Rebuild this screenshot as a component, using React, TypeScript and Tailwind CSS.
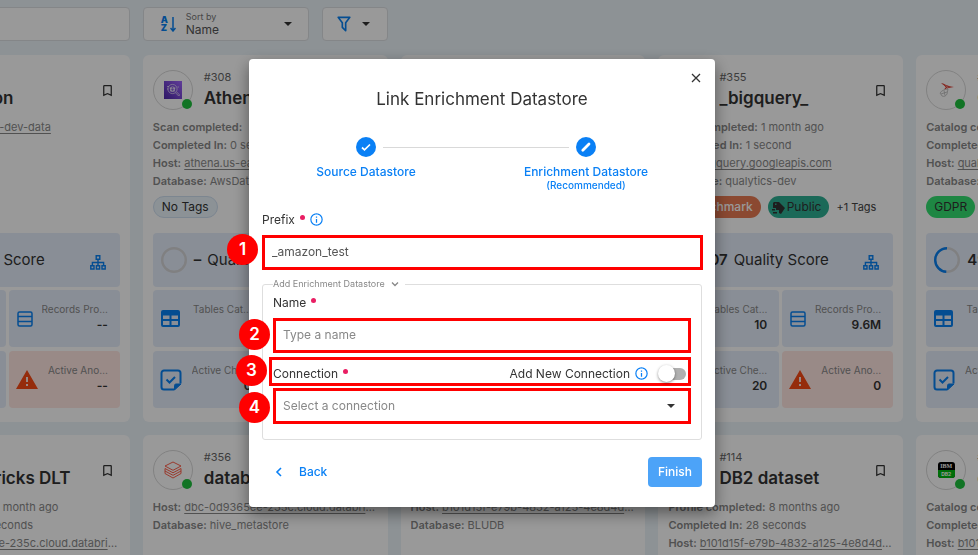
import React from "react";

type Line = { label: string; value: string; link?: boolean };
type Tag = { text: string; tone: "none" | "orange" | "teal" | "green"; icon?: boolean };
type Store = {
  id: string;
  name: string;
  logo: "athena" | "databricks" | "sqlserver" | "db2" | "blank";
  lines: Line[];
  tags?: Tag[];
  more?: string;
  score?: string;
  ring?: number;
  tables?: string;
  records?: string;
  checks?: string;
  anomalies?: string;
};

const stores: Store[] = [
  {
    id: "",
    name: "Amazon",
    logo: "blank",
    lines: [{ label: "Host:", value: "qualytics-aws-dev-data", link: true }],
    records: "--",
    anomalies: "--",
  },
  {
    id: "#308",
    name: "Athena",
    logo: "athena",
    lines: [
      { label: "Scan completed:", value: "" },
      { label: "Completed In:", value: "0 seconds" },
      { label: "Host:", value: "athena.us-east", link: true },
      { label: "Database:", value: "AwsData" },
    ],
    tags: [{ text: "No Tags", tone: "none" }],
    checks: "0",
  },
  { id: "", name: "", logo: "blank", lines: [] },
  {
    id: "#355",
    name: "_bigquery_",
    logo: "blank",
    lines: [
      { label: "Scan completed:", value: "1 month ago" },
      { label: "Completed In:", value: "1 second" },
      { label: "Host:", value: "bigquery.googleapis.com", link: true },
      { label: "Database:", value: "qualytics-dev" },
    ],
    tags: [
      { text: "Benchmark", tone: "orange", icon: true },
      { text: "Public", tone: "teal", icon: true },
    ],
    more: "+1 Tags",
    score: "07",
    ring: 7,
    tables: "10",
    records: "9.6M",
    checks: "20",
    anomalies: "0",
  },
  {
    id: "#",
    name: "C",
    logo: "sqlserver",
    lines: [
      { label: "Catalog completed:", value: "" },
      { label: "Completed In:", value: "" },
      { label: "Host:", value: "qualytics", link: true },
      { label: "Database:", value: "" },
    ],
    tags: [{ text: "GDPR", tone: "green" }],
    score: "49",
    ring: 49,
  },
  {
    id: "",
    name: "Databricks DLT",
    logo: "blank",
    lines: [
      { label: "Profile completed:", value: "1 month ago" },
      { label: "Completed In:", value: "28 seconds" },
      { label: "Host:", value: "dbc-0d9365ee-235c.cloud.databricks.com", link: true },
    ],
  },
  {
    id: "#356",
    name: "databricks",
    logo: "databricks",
    lines: [
      { label: "Host:", value: "dbc-0d9365ee-235c.cloud.databricks.com", link: true },
      { label: "Database:", value: "hive_metastore" },
    ],
  },
  {
    id: "",
    name: "",
    logo: "blank",
    lines: [
      { label: "Host:", value: "b101d15f-e79b-4832-a125-4e8d4d2fe97a", link: true },
      { label: "Database:", value: "BLUDB" },
    ],
  },
  {
    id: "#114",
    name: "DB2 dataset",
    logo: "blank",
    lines: [
      { label: "Profile completed:", value: "8 months ago" },
      { label: "Completed In:", value: "28 seconds" },
      { label: "Host:", value: "b101d15f-e79b-4832-a125-4e8d4d2fe97a", link: true },
    ],
  },
  {
    id: "#",
    name: "c",
    logo: "db2",
    lines: [
      { label: "Catalog completed:", value: "" },
      { label: "Completed In:", value: "" },
      { label: "Host:", value: "b101d15f", link: true },
    ],
  },
];

const tones = {
  none: "border border-[#cfdff0] bg-[#eaf3fb] text-[#333]",
  orange: "bg-[#e87a52] font-medium text-white",
  teal: "bg-[#2db093] text-[#333]",
  green: "bg-[#33e070] text-[#333]",
};

const INFO =
  "M11,9H13V7H11M12,20C7.59,20 4,16.41 4,12C4,7.59 7.59,4 12,4C16.41,4 20,7.59 20,12C20,16.41 16.41,20 12,20M12,2A10,10 0 0,0 2,12A10,10 0 0,0 12,22A10,10 0 0,0 22,12A10,10 0 0,0 12,2M11,17H13V11H11V17Z";
const BOOKMARK =
  "M17,18L12,15.82L7,18V5H17M17,3H7A2,2 0 0,0 5,5V21L12,18L19,21V5C19,3.89 18.1,3 17,3Z";
const FILTER =
  "M15,19.88C15.04,20.18 14.94,20.5 14.71,20.71C14.32,21.1 13.69,21.1 13.3,20.71L9.29,16.7C9.06,16.47 8.96,16.16 9,15.87V10.75L4.21,4.62C3.87,4.19 3.95,3.56 4.38,3.22C4.57,3.08 4.78,3 5,3V3H19V3C19.22,3 19.43,3.08 19.62,3.22C20.05,3.56 20.13,4.19 19.79,4.62L15,10.75V19.88M7.04,5L11,10.06V15.58L13,17.58V10.05L16.96,5H7.04Z";
const ALERT = "M13 14H11V9H13M13 18H11V16H13M1 21H23L12 2L1 21Z";

function Glyph({ d, className }: { d: string; className: string }) {
  return (
    <svg viewBox="0 0 24 24" fill="currentColor" className={className} aria-hidden="true">
      <path d={d} />
    </svg>
  );
}

function Caret({ className = "" }: { className?: string }) {
  return (
    <svg viewBox="0 0 8 4" fill="currentColor" className={`h-1 w-2 shrink-0 ${className}`} aria-hidden="true">
      <path d="M0 0h8L4 4z" />
    </svg>
  );
}

function Logo({ kind }: { kind: Store["logo"] }) {
  if (kind === "athena")
    return (
      <svg viewBox="0 0 18 18" className="size-[18px]" aria-hidden="true">
        <defs>
          <linearGradient id="athena" x1="0" y1="1" x2="1" y2="0">
            <stop offset="0" stopColor="#4d27aa" />
            <stop offset="1" stopColor="#a166ff" />
          </linearGradient>
        </defs>
        <rect width="18" height="18" fill="url(#athena)" />
        <g fill="none" stroke="#fff" strokeWidth="0.6">
          <circle cx="8.500" cy="8" r="4.600" />
          <path d="M11.500 11.800l3.200 3.200 1-1-3.200-3.200M5.500 7c1 1 5 1 6 0M6 9.500c1 1 4 1 5 0M7 6v4.500M10 6v4.500M3 5.500h2M3 8h1.500M13.500 6h1.500" />
          <circle cx="8.500" cy="8" r="2.200" />
        </g>
      </svg>
    );
  if (kind === "databricks")
    return (
      <svg viewBox="0 0 18 18" fill="none" stroke="#ff4f38" strokeWidth="0.9" className="size-[18px]" aria-hidden="true">
        <path d="M1 5l8-4 8 4-8 4.300zM1 7.500l8 4.300 8-4.300V10l-8 4.300L1 10zM1 10v2.500L9 17l8-4.500V10" />
      </svg>
    );
  if (kind === "sqlserver")
    return (
      <svg viewBox="0 0 18 18" fill="none" className="size-[18px]" aria-hidden="true">
        <path d="M4 2c3 0 5 3 13 4-4 .3-6 1.500-10 2.500 1-1 1.500-2 1-3L4 2z" fill="#e0483e" />
        <path d="M6 4l4 4M9 4.500L12 8" stroke="#fff" strokeWidth="0.5" />
        <path d="M3 12c2-3 5-3.500 8-4l-1 5c-1 2-3 3-5 2zM4 13l6-2M7 9.500l1 5" stroke="#b9b9b9" strokeWidth="0.8" />
      </svg>
    );
  if (kind === "db2")
    return (
      <span className="flex h-4 w-[17px] flex-col overflow-hidden rounded-[3px] bg-black text-center font-['Liberation_Serif',serif] text-[6px] leading-[8px] font-bold text-white">
        <span>IBM</span>
        <span className="bg-[#00b80f] font-['Inter',sans-serif] text-[5px]">DB2</span>
      </span>
    );
  return null;
}

function Ring({ value }: { value: number }) {
  return (
    <svg viewBox="0 0 26 26" fill="none" strokeWidth="2.4" className="size-[26px] shrink-0" aria-hidden="true">
      <circle cx="13" cy="13" r="11.800" stroke="#d5d5d8" />
      <circle
        cx="13"
        cy="13"
        r="11.800"
        stroke="#0880f2"
        pathLength="100"
        strokeDasharray={`${value} 100`}
        transform="matrix(0 -1 -1 0 26 26)"
      />
    </svg>
  );
}

const tileIcons = {
  tables: (
    <svg viewBox="0 0 19 17" className="h-[17px] w-[19px] shrink-0 text-[#0880f2]" aria-hidden="true">
      <path
        fill="currentColor"
        fillRule="evenodd"
        d="M2 0h15a2 2 0 012 2v13a2 2 0 01-2 2H2a2 2 0 01-2-2V2a2 2 0 012-2zM2 5.500v3.500h6.500V5.500zM10.500 5.500v3.500H17V5.500zM2 11v4h6.500v-4zM10.500 11v4H17v-4z"
      />
    </svg>
  ),
  records: (
    <svg viewBox="0 0 16 16" fill="none" stroke="currentColor" strokeWidth="1.5" className="size-4 shrink-0 text-[#0880f2]" aria-hidden="true">
      <rect x="1" y="1" width="14" height="14" rx="1.500" />
      <path d="M1 5.500h14M1 10.500h14" />
    </svg>
  ),
  checks: (
    <svg viewBox="0 0 22 22" fill="none" stroke="currentColor" strokeWidth="2" className="-mx-px size-[22px] shrink-0 text-[#0880f2]" aria-hidden="true">
      <path d="M14 20.500H4a2.500 2.500 0 01-2.500-2.500V4A2.500 2.500 0 014 1.500h14A2.500 2.500 0 0120.500 4v10.500M6.500 10.500l3 3 5.500-5.500" />
      <path d="M14.500 21v-4.500a1.500 1.500 0 011.500-1.500H21z" fill="currentColor" strokeWidth="1" />
    </svg>
  ),
  anomalies: <Glyph d={ALERT} className="-mx-[2px] size-6 shrink-0 text-[#f84a14]" />,
};

function Tile({ kind, label, value }: { kind: keyof typeof tileIcons; label: string; value?: string }) {
  return (
    <div
      className={`flex h-[57px] min-w-0 items-center justify-between gap-1 rounded pr-3 pl-2 ${
        kind === "anomalies" ? "bg-[#ffe6e2]" : "bg-[#e5edfa]"
      }`}
    >
      {tileIcons[kind]}
      <div className="mb-1 flex min-w-0 flex-col text-right">
        <span className="truncate text-[10px] leading-4 text-[#888]">{label}</span>
        <span className="h-4 text-xs leading-4 font-semibold text-[#333]">{value}</span>
      </div>
    </div>
  );
}

function Card({ store }: { store: Store }) {
  return (
    <article className="flex min-w-0 flex-col rounded-md bg-white px-[10px] pt-[15px] pb-[14px]">
      <header className="flex h-10 items-center">
        <div className="relative flex size-10 shrink-0 items-center justify-center rounded-full border border-[#d8d8d8]">
          <Logo kind={store.logo} />
          <span className="absolute right-0 bottom-0 size-[10px] rounded-full bg-[#1fc13e]" />
        </div>
        <div className="ml-[11px] min-w-0 flex-1">
          <p className="h-4 text-[11px] leading-[14px] text-[#666]">{store.id}</p>
          <h2 className="h-6 truncate text-[17px] leading-6 font-semibold text-[#333]">{store.name}</h2>
        </div>
        <button type="button" aria-label="Bookmark" className="mr-[5px] text-[#333]">
          <Glyph d={BOOKMARK} className="size-[15px]" />
        </button>
      </header>
      <div className="mt-2 min-h-[72px] text-[#888]">
        {store.lines.map((line) => (
          <p key={line.label} className="truncate text-[11px] leading-[18px]">
            <span className="font-semibold">{line.label}</span>{" "}
            {line.link ? (
              <a href="#host" className="underline underline-offset-2">
                {line.value}
              </a>
            ) : (
              line.value
            )}
          </p>
        ))}
      </div>
      <div className="mt-[6px] flex h-[22px] items-center gap-[7px]">
        {store.tags?.map((tag) => (
          <span
            key={tag.text}
            className={`flex h-[22px] items-center gap-[2px] rounded-full text-xs ${tag.icon ? "pr-2 pl-1" : "px-2"} ${tones[tag.tone]}`}
          >
            {tag.icon && (
              <svg viewBox="0 0 13 13" fill="currentColor" className="size-[13px]" aria-hidden="true">
                <path
                  fillRule="evenodd"
                  d="M2 1h5l6 6-4 6-2-1v-3H4V7H1V2zM3 2.500v1.500h1.500V2.500zM0 8h3v1.500H0zM1 11h4v1.500H1z"
                />
              </svg>
            )}
            {tag.text}
          </span>
        ))}
        {store.more && <span className="text-[11px] text-[#444]">{store.more}</span>}
      </div>
      <div className="mt-[15px] flex h-[54px] items-center rounded bg-[#e5edfa] px-2">
        <Ring value={store.ring ?? 0} />
        <span className="ml-[7px] text-[15px] font-semibold text-[#333]">{store.score ?? "–"}</span>
        <span className="ml-[6px] text-[15px] whitespace-nowrap text-[#333]">Quality Score</span>
        <svg viewBox="0 0 16 15" fill="none" stroke="currentColor" strokeWidth="1.4" className="mt-1 mr-[6px] ml-auto h-[15px] w-4 shrink-0 text-[#0880f2]" aria-hidden="true">
          <path d="M6.200.800h3.600v3.400H6.200zM.800 10.800h3.200v3.200H.800zM6.400 10.800h3.200v3.200H6.400zM12 10.800h3.200v3.200H12zM8 4.200v6.600M2.400 10.800V7.500h11.200v3.300" />
        </svg>
      </div>
      <div className="mt-[3px] grid grid-cols-2 gap-x-[3px] gap-y-1">
        <Tile kind="tables" label="Tables Cat…" value={store.tables} />
        <Tile kind="records" label="Records Pro…" value={store.records} />
        <Tile kind="checks" label="Active Che…" value={store.checks} />
        <Tile kind="anomalies" label="Active Ano…" value={store.anomalies} />
      </div>
    </article>
  );
}

function Badge({ n, className }: { n: number; className: string }) {
  return (
    <span
      className={`absolute flex size-[31px] items-center justify-center rounded-full bg-[#ff0000] text-[17px] font-semibold text-white ${className}`}
    >
      {n}
    </span>
  );
}

function Required() {
  return <span className="mb-[5px] ml-[5px] size-[5px] rounded-full bg-[#e91e63]" />;
}

function Info() {
  return <Glyph d={INFO} className="ml-1 size-[15px] text-[#0a80f5]" />;
}

function Dialog() {
  return (
    <div className="fixed inset-0 flex items-start justify-center bg-black/40 pt-[59px] pr-[14px]">
      <section
        role="dialog"
        aria-labelledby="dialog-title"
        className="relative w-[466px] rounded bg-white px-[13px] pb-5 shadow-[0_6px_16px_rgba(0,0,0,0.45)]"
      >
        <button type="button" aria-label="Close" className="absolute top-[14px] right-[14px] text-[#333]">
          <svg viewBox="0 0 10 10" stroke="currentColor" strokeWidth="1.3" className="size-[10px]" aria-hidden="true">
            <path d="M1 1l8 8M9 1L1 9" />
          </svg>
        </button>
        <h1 id="dialog-title" className="pt-7 text-center text-[17px] leading-6 text-[#333]">
          Link Enrichment Datastore
        </h1>

        <ol className="relative mt-[26px] flex h-[54px] justify-center text-center text-xs font-medium text-[#0a80f5]">
          <li className="flex w-[208px] flex-col items-center">
            <span className="flex size-5 items-center justify-center rounded-full bg-[#0a80f5]">
              <svg viewBox="0 0 10 10" fill="none" stroke="#fff" strokeWidth="1.7" className="size-[10px]" aria-hidden="true">
                <path d="M1 5.500l2.500 2.300L9 2.500" />
              </svg>
            </span>
            <span className="mt-[7px] leading-4">Source Datastore</span>
          </li>
          <li aria-hidden="true" className="absolute top-[10px] right-[133px] left-[121px] h-px bg-[#d9d9d9]" />
          <li className="flex w-[232px] flex-col items-center">
            <span className="flex size-5 items-center justify-center rounded-full bg-[#0a80f5]">
              <svg viewBox="0 0 12 12" fill="none" stroke="#fff" strokeWidth="2.800" strokeLinecap="round" className="size-3" aria-hidden="true">
                <path d="M2.800 9.200L9 3" />
              </svg>
            </span>
            <span className="mt-[7px] leading-4">Enrichment Datastore</span>
            <span className="text-[10px] leading-[10px]">(Recommended)</span>
          </li>
        </ol>

        <div className="mt-5 flex h-[17px] items-center text-xs text-[#333]">
          <label htmlFor="prefix">Prefix</label>
          <Required />
          <Info />
        </div>
        <div className="relative -mr-px mt-[7px]">
          <input
            id="prefix"
            defaultValue="_amazon_test"
            className="block h-[35px] w-full border-[3px] border-[#ff0000] bg-white px-[7px] pb-[2px] text-xs text-[#555]"
          />
          <Badge n={1} className="-top-px left-[-35px]" />
        </div>

        <fieldset className="mt-2 rounded-[3px] border border-[#dedede] px-[10px] pb-[15px]">
          <legend className="flex h-3 items-center gap-[6px] pr-[6px] text-[9px] leading-3 text-[#888]">
            Add Enrichment Datastore
            <svg viewBox="0 0 8 5" fill="none" stroke="currentColor" strokeWidth="1.3" className="h-[5px] w-2" aria-hidden="true">
              <path d="M1 .500l3 3 3-3" />
            </svg>
          </legend>
          <div className="mt-[5px] flex h-4 items-center text-xs text-[#333]">
            <label htmlFor="name">Name</label>
            <Required />
          </div>
          <div className="relative mt-[7px]">
            <input
              id="name"
              placeholder="Type a name"
              className="block h-[35px] w-full border-[3px] border-[#ff0000] bg-white px-[7px] pb-[2px] text-xs text-[#333] placeholder:text-[#888]"
            />
            <Badge n={2} className="top-px left-[-34px]" />
          </div>
          <div className="relative mt-1 -ml-1 flex h-[29px] items-center border-[3px] border-[#ff0000] pt-1 pl-px text-xs text-[#333]">
            <label htmlFor="connection">Connection</label>
            <Required />
            <label htmlFor="new-connection" className="ml-auto">
              Add New Connection
            </label>
            <Info />
            <input
              id="new-connection"
              type="checkbox"
              role="switch"
              className="mr-[2px] ml-[13px] flex h-3 w-6 appearance-none items-center rounded-full bg-[#b0b0b0] before:-ml-1 before:size-[17px] before:rounded-full before:bg-white before:shadow-[0_1px_3px_rgba(0,0,0,0.45)]"
            />
            <Badge n={3} className="top-[-5px] left-[-36px]" />
          </div>
          <div className="relative mt-[2px]">
            <select
              id="connection"
              className="block h-9 w-full appearance-none border-[3px] border-[#ff0000] bg-white px-[7px] text-xs text-[#888]"
            >
              <option>Select a connection</option>
            </select>
            <Caret className="pointer-events-none absolute top-4 right-4 text-[#333]" />
            <Badge n={4} className="top-1 left-[-34px]" />
          </div>
        </fieldset>

        <footer className="mt-[17px] flex items-center justify-between text-xs font-medium">
          <button type="button" className="flex items-center gap-4 pl-[13px] text-[#0a80f5]">
            <svg viewBox="0 0 8 10" fill="none" stroke="currentColor" strokeWidth="1.600" className="h-[10px] w-2" aria-hidden="true">
              <path d="M6 1L2 5l4 4" />
            </svg>
            Back
          </button>
          <button type="button" className="h-[30px] rounded-sm bg-[#4ca3f8] px-[10px] text-white">
            Finish
          </button>
        </footer>
      </section>
    </div>
  );
}

export default function App() {
  return (
    <div className="h-screen overflow-hidden bg-[#ebf3f8] font-['Inter',sans-serif]">
      <main className="-mr-[183px] -ml-[115px]">
        <div className="grid grid-cols-5 gap-[13px] pt-[7px]">
          <input
            type="search"
            aria-label="Search"
            className="h-[34px] rounded-sm border border-[#dcdfe3] bg-white px-3"
          />
          <div className="flex gap-[13px]">
            <div className="flex h-[34px] w-[166px] items-center rounded-sm border border-[#dcdfe3] bg-white pr-4 pl-[17px]">
              <span aria-hidden="true" className="flex w-[7px] flex-col text-[9px] leading-[8px] font-black text-[#0880f2]">
                <span>A</span>
                <span>Z</span>
              </span>
              <svg viewBox="0 0 6 15" fill="none" stroke="#0880f2" strokeWidth="1.500" className="ml-[2px] h-[15px] w-[6px]" aria-hidden="true">
                <path d="M3 0v13M.500 11L3 14l2.500-3" />
              </svg>
              <div className="ml-[10px] flex flex-1 flex-col">
                <label htmlFor="sort" className="text-[9px] leading-3 text-[#777]">
                  Sort by
                </label>
                <select id="sort" className="appearance-none text-xs leading-[14px] text-[#555]">
                  <option>Name</option>
                </select>
              </div>
              <Caret className="text-[#333]" />
            </div>
            <button
              type="button"
              aria-label="Filter"
              className="flex h-[34px] w-[66px] items-center rounded-sm border border-[#dcdfe3] bg-white pl-[11px]"
            >
              <Glyph d={FILTER} className="size-5 text-[#0880f2]" />
              <Caret className="ml-2 text-[#333]" />
            </button>
          </div>
        </div>
        <div className="mt-[14px] grid grid-cols-5 gap-[13px]">
          {stores.map((store, i) => (
            <Card key={i} store={store} />
          ))}
        </div>
      </main>
      <Dialog />
    </div>
  );
}
